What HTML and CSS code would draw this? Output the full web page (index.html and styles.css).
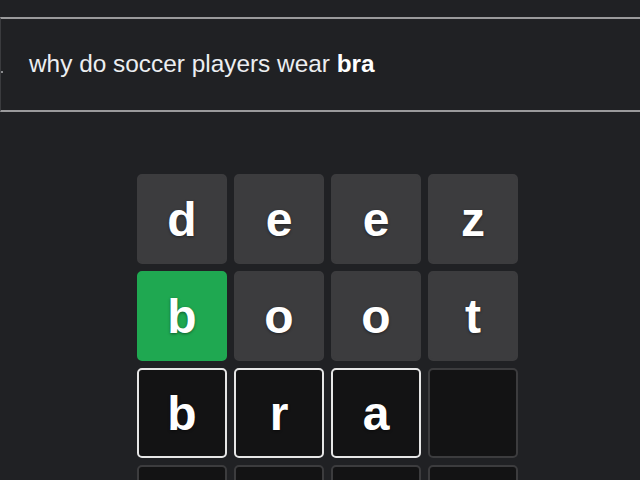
FILE: index.html
```html
<!DOCTYPE html>
<html lang="en">
<head>
  <meta charset="UTF-8" />
  <title>Wordle Search</title>
  <link rel="stylesheet" href="styles.css">
</head>
<body>
  <div class="suggest">
    <span class="suggest-icon"></span>
    <p class="suggest-text">why do soccer players wear <b>bra</b></p>
  </div>

  <div class="board">
    <div class="tile filled">d</div>
    <div class="tile filled">e</div>
    <div class="tile filled">e</div>
    <div class="tile filled">z</div>

    <div class="tile correct">b</div>
    <div class="tile filled">o</div>
    <div class="tile filled">o</div>
    <div class="tile filled">t</div>

    <div class="tile typed">b</div>
    <div class="tile typed">r</div>
    <div class="tile typed">a</div>
    <div class="tile"></div>

    <div class="tile"></div>
    <div class="tile"></div>
    <div class="tile"></div>
    <div class="tile"></div>
  </div>
</body>
</html>
```

FILE: styles.css
```css
body {
  margin: 0;
  background: #202124;
  font-family: "Liberation Sans", Arial, sans-serif;
  overflow: hidden;
}

/* search suggestion row */
.suggest {
  margin-top: 17px;
  height: 91px;
  border-top: 2px solid #9a9a9c;
  border-bottom: 2px solid #9a9a9c;
  border-left: 1px solid #3a3b3e;
  display: flex;
  align-items: center;
  position: relative;
}

.suggest-icon {
  position: absolute;
  left: 0;
  top: 52px;
  width: 2px;
  height: 2px;
  background: #8a8b8e;
}

.suggest-text {
  margin: 0 0 0 28px;
  color: #eceef1;
  font-size: 24.4px;
  padding-bottom: 1px;
}

.suggest-text b {
  color: #ffffff;
}

/* game board */
.board {
  margin: 62px 0 0 137px;
  display: grid;
  grid-template-columns: repeat(4, 90px);
  grid-auto-rows: 90px;
  gap: 7px;
}

.tile {
  box-sizing: border-box;
  border: 2px solid #3c3c3e;
  border-radius: 5px;
  background: #131314;
  color: #ffffff;
  font-size: 48px;
  font-weight: bold;
  display: flex;
  align-items: center;
  justify-content: center;
  padding-top: 1px;
  text-shadow: 0 1px 3px rgba(0, 0, 0, 0.45);
}

.tile.filled {
  background: #3c3c3e;
}

.tile.correct {
  background: #1fa851;
  border-color: #1fa851;
}

.tile.typed {
  border-color: #e6e6e6;
}
```
